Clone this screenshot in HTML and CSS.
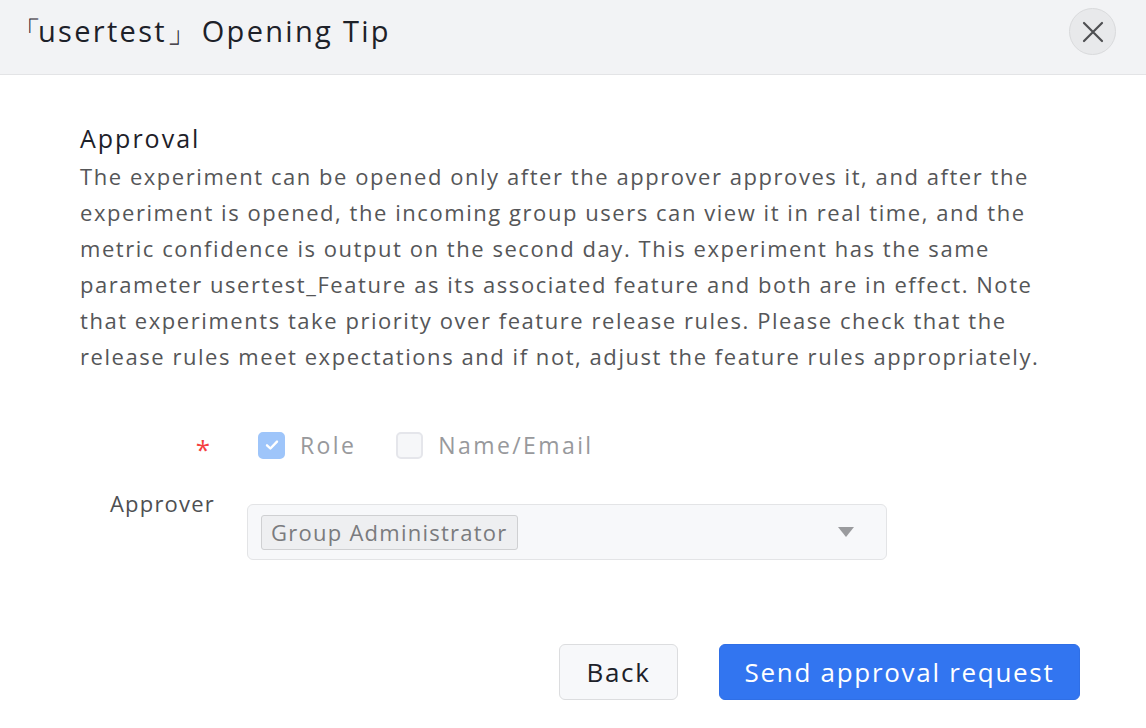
FILE: index.html
```html
<!DOCTYPE html>
<html>
<head>
<meta charset="utf-8">
<link rel="stylesheet" href="styles.css">
</head>
<body>
<div class="dialog">
  <div class="header">
    <div class="title"><span class="br-l">「</span>usertest<span class="br-r">」</span> Opening Tip</div>
    <button class="close" aria-label="Close">
      <svg width="22" height="22" viewBox="0 0 22 22"><path d="M2 2L20 20M20 2L2 20" stroke="#4e4f52" stroke-width="2.2" stroke-linecap="round"/></svg>
    </button>
  </div>
  <div class="body">
    <div class="section-title">Approval</div>
    <p class="desc">The experiment can be opened only after the approver approves it, and after the experiment is opened, the incoming group users can view it in real time, and the metric confidence is output on the second day. This experiment has the same parameter usertest_Feature as its associated feature and both are in effect. Note that experiments take priority over feature release rules. Please check that the release rules meet expectations and if not, adjust the feature rules appropriately.</p>
    <div class="form">
      <div class="row row-check">
        <div class="label"><span class="req">*</span></div>
        <div class="control checks">
          <label class="check">
            <span class="box checked"><svg width="16" height="16" viewBox="0 0 16 16"><path d="M3 8.3L6.4 11.5L13 4.6" fill="none" stroke="#fff" stroke-width="2.4" stroke-linecap="round" stroke-linejoin="round"/></svg></span>
            <span class="check-text">Role</span>
          </label>
          <label class="check">
            <span class="box"></span>
            <span class="check-text">Name/Email</span>
          </label>
        </div>
      </div>
      <div class="row row-select">
        <div class="label label-text">Approver</div>
        <div class="control">
          <div class="select">
            <span class="tag">Group Administrator</span>
            <span class="arrow"></span>
          </div>
        </div>
      </div>
    </div>
  </div>
  <div class="footer">
    <button class="btn btn-back">Back</button>
    <button class="btn btn-primary">Send approval request</button>
  </div>
</div>
</body>
</html>
```
FILE: styles.css
```css
* { box-sizing: border-box; }
html, body { margin: 0; padding: 0; background: #fff; }
body {
  font-family: "Open Sans", "Liberation Sans", sans-serif;
  color: #1d2129;
  width: 1146px;
  height: 728px;
  overflow: hidden;
}
.dialog { display: flex; flex-direction: column; height: 728px; }
.header {
  height: 75px;
  background: #f2f3f5;
  border-bottom: 1px solid #e3e4e6;
  display: flex;
  align-items: center;
  justify-content: space-between;
  padding: 0 30px 0 12px;
  flex-shrink: 0;
}
.title { font-size: 29px; color: #1d2129; letter-spacing: 2.3px; margin-top: -10px; }
.br-l { letter-spacing: -3px; }
.br-r { letter-spacing: -4px; }
.close {
  width: 47px; height: 47px; border-radius: 50%;
  background: #e8e9eb; border: 1px solid #d9dadc;
  display: flex; align-items: center; justify-content: center;
  padding: 0; margin-top: -11px;
}
.body { padding: 46px 80px 0 80px; }
.section-title { font-size: 25px; line-height: 34px; color: #1d2129; letter-spacing: 2px; }
.desc {
  margin: 3px 0 0 0;
  font-size: 22px;
  letter-spacing: 1.55px;
  line-height: 36px;
  color: #555658;
}
.form { padding-top: 52px; }
.row { display: flex; }
.label { width: 168px; flex-shrink: 0; text-align: right; padding-right: 36px; }
.row-check { height: 38px; align-items: center; }
.req { color: #f53f3f; font-size: 26px; position: relative; top: 4px; margin-right: 2px;}
.checks { display: flex; align-items: center; gap: 0; margin-left: 10px; }
.check { display: flex; align-items: center; margin-right: 40px; }
.box {
  width: 27px; height: 27px; border-radius: 5px;
  border: 2px solid #e5e6eb; background: #f6f7f9;
  display: flex; align-items: center; justify-content: center;
}
.box.checked { background: #9ec5fa; border-color: #9ec5fa; }
.check-text { font-size: 23px; color: #98999c; margin-left: 15px; letter-spacing: 2.4px; }
.row-select { margin-top: 26px; }
.label-text { font-size: 22px; color: #4e4f52; text-align: left; padding-left: 30px; margin-top: -2px; letter-spacing: 1.2px; }
.select {
  width: 640px; height: 56px; margin-left: -1px;
  border: 1.5px solid #e3e4e6; border-radius: 6px;
  background: #f7f8fa;
  display: flex; align-items: center; justify-content: space-between;
  padding: 0 32px 0 13px;
  margin-top: 14px;
}
.tag {
  font-size: 22px; color: #7a7b7e; letter-spacing: 1.25px;
  background: #eeeff1; border: 1.5px solid #cfd0d2; border-radius: 3px;
  padding: 0 9px; height: 35px; line-height: 32px;
}
.arrow {
  width: 0; height: 0;
  border-left: 8px solid transparent; border-right: 8px solid transparent;
  border-top: 10px solid #9a9b9e;
}
.footer {
  margin-top: auto;
  display: flex; justify-content: flex-end; gap: 41px;
  padding: 0 66px 28px 0;
}
.btn {
  height: 56px; border-radius: 6px; font-family: inherit; font-size: 26px;
  padding: 0; letter-spacing: 1.7px;
}
.btn-back { width: 119px; background: #f7f8fa; border: 1.5px solid #dcdddf; color: #1d2129; }
.btn-primary { width: 361px; background: #3275f0; border: 1px solid #2f6fe6; color: #fff; }
```
